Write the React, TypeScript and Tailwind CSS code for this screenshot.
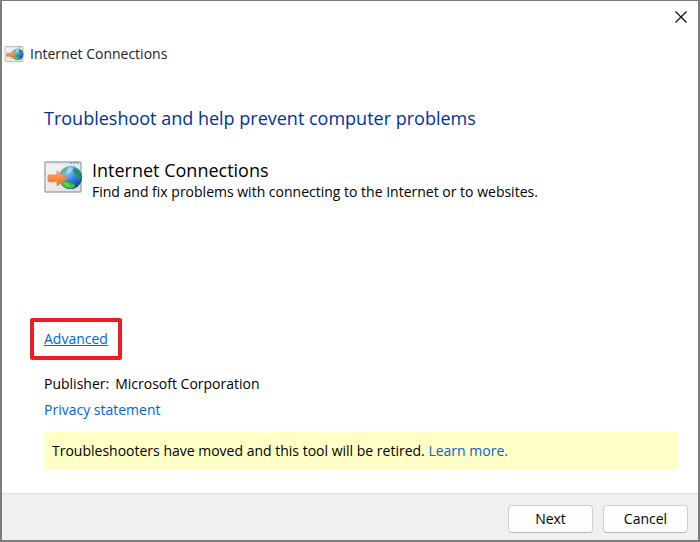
import React from 'react'

const ConnectionIcon = ({ className }: { className: string }) => (
    <svg viewBox="0 0 38 32" className={className} aria-hidden="true">
        <defs>
            <linearGradient id="pane" x1="0" y1="0" x2="1" y2="1">
                <stop offset="0" stopColor="#f6f7f8" />
                <stop offset="1" stopColor="#d9dcdf" />
            </linearGradient>
            <radialGradient id="globe" cx="0.35" cy="0.2" r="0.9">
                <stop offset="0" stopColor="#a9dafa" />
                <stop offset="0.45" stopColor="#3a8be0" />
                <stop offset="1" stopColor="#0d3596" />
            </radialGradient>
            <linearGradient id="arrow" x1="0" y1="0" x2="0" y2="1">
                <stop offset="0" stopColor="#ffab68" />
                <stop offset="1" stopColor="#ec6a1e" />
            </linearGradient>
        </defs>
        <rect x="1" y="1" width="36" height="30" rx="1" fill="url(#pane)" stroke="#a2a8af" strokeWidth="1.4" />
        <path d="M2 3h34" stroke="#e4e7ea" strokeWidth="2" />
        <path d="M26.500 2h1.6M29.700 2h1.6M32.900 2h1.6" stroke="#59616c" strokeWidth="1.2" />
        <circle cx="26.5" cy="16.5" r="11.5" fill="url(#globe)" />
        <path d="M30 7c4 1.500 6.500 5 7 8.500l-1.500 5-2.500-2.500 0-4-3-2-1-3z" fill="#25905a" />
        <path d="M17.500 10c2-2.500 4-4 7-4l-1 3-3 3-2 0z" fill="#58b877" opacity="0.9" />
        <path d="M16.500 21l5.500-1 4 2 4 1 1 3-4 1.500c-4 0-8.500-2-10.500-6.500z" fill="#3fc42e" />
        <path d="M19 22l4 0 3 3-2 1z" fill="#8be05c" opacity="0.7" />
        <path d="M24 7c2-1 4-1 5 0l-2 4-4 1z" fill="#b4e2fb" opacity="0.65" />
        <path d="M4 14h9v-4.200L22.500 17.500 13 25v-4.200H4z" fill="url(#arrow)" stroke="#f08a48" strokeWidth="0.8" />
    </svg>
)

const DialogButton = ({ children }: { children: React.ReactNode }) => (
    <button
        type="button"
        className="h-7 w-[85px] rounded border border-[#cfcfcf] border-b-[#b8b8b8] bg-[#fdfdfd] text-sm text-black"
    >
        {children}
    </button>
)

const App = () => {
    return (
        <div className="flex min-h-screen flex-col border-2 border-t-1 border-[#7d7d7d] bg-white font-['Open_Sans','Noto_Sans',sans-serif] text-sm text-black">
            <header>
                <div className="flex h-8 items-center justify-end pr-[9px]">
                    <button type="button" aria-label="Close" className="flex h-4 w-4 items-center justify-center">
                        <svg viewBox="0 0 12 12" className="h-3 w-3" stroke="#111" strokeWidth="1.3" fill="none">
                            <path d="M0.500 0.500l11 11M11.500 0.500l-11 11" />
                        </svg>
                    </button>
                </div>
                <div className="mt-[9px] flex h-6 items-center gap-1.5 pl-0.5">
                    <ConnectionIcon className="h-4 w-5" />
                    <span className="text-[#222]">Internet Connections</span>
                </div>
            </header>

            <main className="flex flex-1 flex-col pt-[38px] pr-5 pb-[23px] pl-[42px]">
                <h1 className="text-lg text-[#003399]">Troubleshoot and help prevent computer problems</h1>

                <section className="mt-[26px] flex items-start gap-2.5">
                    <ConnectionIcon className="mt-[3px] h-8 w-[38px] shrink-0" />
                    <div>
                        <h2 className="text-lg leading-6">Internet Connections</h2>
                        <p>Find and fix problems with connecting to the Internet or to websites.</p>
                    </div>
                </section>

                <div className="mt-auto -ml-3.5 self-start rounded-xs border-4 border-[#ed1c24] px-2.5 py-[7px]">
                    <a href="#" className="text-[#0066cc] underline">Advanced</a>
                </div>

                <div className="mt-3.5 flex gap-1.5">
                    <span>Publisher:</span>
                    <span>Microsoft Corporation</span>
                </div>
                <a href="#" className="mt-1.5 self-start text-[#0066cc]">Privacy statement</a>

                <p className="mt-3 bg-[#ffffc6] px-2 py-[9px]">
                    Troubleshooters have moved and this tool will be retired.{' '}
                    <a href="#" className="text-[#0066cc]">Learn more.</a>
                </p>
            </main>

            <footer className="flex items-center justify-end gap-2.5 border-t border-[#dfdfdf] bg-[#f0f0f0] pt-[11px] pr-2.5 pb-[7px]">
                <DialogButton>Next</DialogButton>
                <DialogButton>Cancel</DialogButton>
            </footer>
        </div>
    )
}

export default App
